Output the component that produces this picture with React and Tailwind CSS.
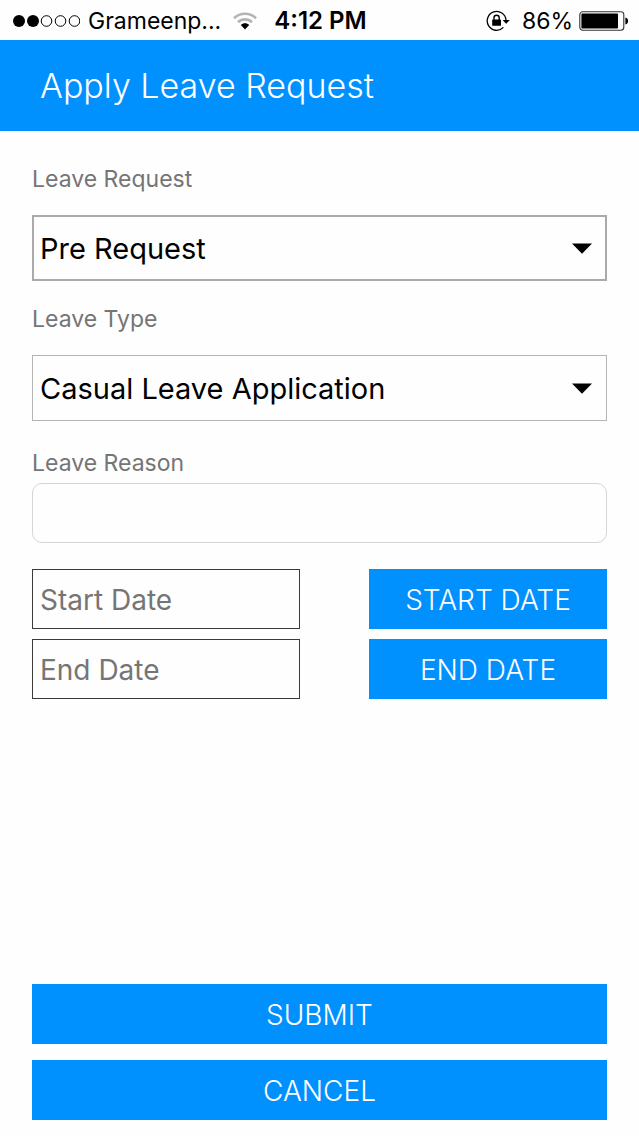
import { useState } from "react";

const StatusBar = () => {
  return (
    <div className="flex h-10 items-center justify-between pt-0.5 pr-2.5 pl-3 text-[23px] text-black">
      <div className="flex flex-1 items-center">
        <svg width="68" height="14" viewBox="0 0 68 14" aria-hidden="true">
          <circle cx="7" cy="7" r="6" />
          <circle cx="21" cy="7" r="6" />
          <g fill="none" stroke="black" strokeWidth="1">
            <circle cx="34.5" cy="7" r="5.3" />
            <circle cx="48.5" cy="7" r="5.3" />
            <circle cx="62.5" cy="7" r="5.3" />
          </g>
        </svg>
        <span className="ml-2">Grameenp...</span>
        <svg
          className="ml-3"
          width="24"
          height="18"
          viewBox="0 0 24 18"
          aria-hidden="true"
        >
          <g fill="none" stroke="#b4b4b4" strokeWidth="2.6">
            <path d="M1 6.2C7.2 0.2 16.8 0.2 23 6.2" />
            <path d="M5 10.2C9 6.4 15 6.4 19 10.2" />
          </g>
          <path d="M7.8 13C10.2 10.6 13.8 10.6 16.2 13L12 17.4Z" />
        </svg>
      </div>

      <span className="text-2xl font-semibold">4:12 PM</span>

      <div className="flex flex-1 items-center justify-end">
        <svg width="24" height="22" viewBox="0 0 24 22" aria-hidden="true">
          <path
            d="M17.4 17.4A9.4 9.4 0 1 1 20 10.2"
            fill="none"
            stroke="black"
            strokeWidth="1.3"
          />
          <path d="M16.6 10H23.8L20.2 13.8Z" />
          <rect x="6.2" y="9.6" width="8.8" height="6.2" rx="0.6" />
          <path
            d="M8 10V7.8A2.6 2.6 0 0 1 13.2 7.8V10"
            fill="none"
            stroke="black"
            strokeWidth="1.4"
          />
        </svg>
        <span className="ml-3">86%</span>
        <svg
          className="ml-1.5"
          width="50"
          height="20"
          viewBox="0 0 50 20"
          aria-hidden="true"
        >
          <rect
            x="0.8"
            y="0.8"
            width="44"
            height="18.4"
            rx="3"
            fill="none"
            stroke="#333333"
            strokeWidth="1.1"
          />
          <rect x="2.4" y="2.4" width="36.6" height="15.2" rx="1" />
          <path d="M46.4 6.6C50 7 50 13 46.4 13.4Z" />
        </svg>
      </div>
    </div>
  );
};

const SelectField = ({ id, label, options, value, onChange, className }) => {
  return (
    <div>
      <label htmlFor={id} className="mb-5 block text-[23px] leading-8 text-[#757575]">
        {label}
      </label>
      <div className="relative">
        <select
          id={id}
          name={id}
          value={value}
          onChange={onChange}
          className={`block h-[66px] w-full appearance-none bg-transparent pt-0.5 text-[29px] text-black ${className}`}
        >
          {options.map((option) => (
            <option key={option}>{option}</option>
          ))}
        </select>
        <svg
          className="pointer-events-none absolute top-7 right-3.5"
          width="22"
          height="11"
          viewBox="0 0 22 11"
          aria-hidden="true"
        >
          <path d="M1 0.5H21L11 10.8Z" />
        </svg>
      </div>
    </div>
  );
};

const App = () => {
  const [data, setData] = useState({
    leaveRequest: "Pre Request",
    leaveType: "Casual Leave Application",
    leaveReason: "",
    startDate: "",
    endDate: "",
  });

  const handleOnChange = (e) => {
    const { name, value } = e.target;
    setData((prev) => ({ ...prev, [name]: value }));
  };

  const handleSubmit = (e) => {
    e.preventDefault();
  };

  return (
    <div className="flex min-h-screen flex-col bg-[#fefefe] font-['Inter',sans-serif]">
      <StatusBar />

      <header className="bg-[#0091ff] px-10 py-6">
        <h1 className="text-[34px] leading-[43px] font-light text-white">
          Apply Leave Request
        </h1>
      </header>

      <form
        onSubmit={handleSubmit}
        className="flex flex-1 flex-col px-8 pt-8 pb-4"
      >
        <div className="flex flex-col gap-[22px]">
          <SelectField
            id="leaveRequest"
            label="Leave Request"
            options={["Pre Request", "Post Request"]}
            value={data.leaveRequest}
            onChange={handleOnChange}
            className="border-2 border-[#aaaaaa] px-1.5"
          />
          <SelectField
            id="leaveType"
            label="Leave Type"
            options={["Casual Leave Application", "Sick Leave Application"]}
            value={data.leaveType}
            onChange={handleOnChange}
            className="border border-[#b8b4b6] px-[7px]"
          />
        </div>

        {/* Reason */}
        <label
          htmlFor="leaveReason"
          className="mt-[26px] mb-1 block text-[23px] leading-8 text-[#757575]"
        >
          Leave Reason
        </label>
        <input
          id="leaveReason"
          name="leaveReason"
          value={data.leaveReason}
          onChange={handleOnChange}
          className="h-[60px] w-full rounded-[10px] border border-[#d6d4d5] px-2 text-[28px]"
        />

        {/* Dates */}
        <div className="mt-[26px] mb-8 grid grid-cols-[268fr_238fr] gap-x-[69px] gap-y-2.5">
          <input
            name="startDate"
            aria-label="Start Date"
            placeholder="Start Date"
            value={data.startDate}
            onChange={handleOnChange}
            className="h-[60px] w-full min-w-0 border border-[#3a3a3a] px-[7px] pt-0.5 text-[28px] placeholder:text-[#757575]"
          />
          <button
            type="button"
            className="h-[60px] bg-[#0091ff] pt-0.5 text-[28px] font-light text-white"
          >
            START DATE
          </button>
          <input
            name="endDate"
            aria-label="End Date"
            placeholder="End Date"
            value={data.endDate}
            onChange={handleOnChange}
            className="h-[60px] w-full min-w-0 border border-[#3a3a3a] px-[7px] pt-0.5 text-[28px] placeholder:text-[#757575]"
          />
          <button
            type="button"
            className="h-[60px] bg-[#0091ff] pt-0.5 text-[28px] font-light text-white"
          >
            END DATE
          </button>
        </div>

        <div className="mt-auto flex flex-col gap-4">
          <button
            type="submit"
            className="h-[60px] w-full bg-[#0091ff] pt-0.5 text-[28px] font-light text-white"
          >
            SUBMIT
          </button>
          <button
            type="button"
            className="h-[60px] w-full bg-[#0091ff] pt-0.5 text-[28px] font-light text-white"
          >
            CANCEL
          </button>
        </div>
      </form>
    </div>
  );
};

export default App;
